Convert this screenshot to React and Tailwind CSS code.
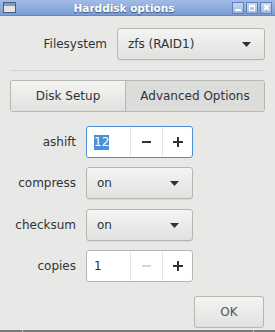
import React from "react";

function Arrow() {
  return (
    <svg width="9" height="5" viewBox="0 0 9 5" className="block">
      <path d="M0 0 L9 0 L4.5 5 Z" fill="#2e3436" />
    </svg>
  );
}

function Combo({ text, className }) {
  return (
    <div
      className={
        "h-[32px] flex items-center justify-between rounded-[3px] border border-[#b6b6b3] bg-gradient-to-b from-[#f4f4f3] to-[#e1e1df] shadow-[0_1px_0_rgba(0,0,0,0.06)] pl-[10px] " +
        className
      }
    >
      <span>{text}</span>
      <Arrow />
    </div>
  );
}

function Spin({ value, focused, selected, minusDisabled }) {
  return (
    <div
      className={
        "h-[32px] w-[107px] flex rounded-[3px] border bg-white " +
        (focused ? "border-[#4a90d9]" : "border-[#b6b6b3]")
      }
    >
      <div className="w-[43px] flex items-center pl-[7px]">
        {selected ? (
          <span className="bg-[#4a90d9] text-white leading-[15px]">{value}</span>
        ) : (
          <span>{value}</span>
        )}
      </div>
      <div className="w-[32px] flex items-center justify-center border-l border-[#e4e4e2]">
        <div className={"w-[9px] h-[2px] " + (minusDisabled ? "bg-[#d4d4d2]" : "bg-[#2e3436]")} />
      </div>
      <div className="flex-1 flex items-center justify-center border-l border-[#e4e4e2]">
        <div className="relative w-[10px] h-[10px]">
          <div className="absolute left-0 top-[4px] w-[10px] h-[2px] bg-[#2e3436]" />
          <div className="absolute left-[4px] top-0 w-[2px] h-[10px] bg-[#2e3436]" />
        </div>
      </div>
    </div>
  );
}

function TitleBtn({ children }) {
  return (
    <div className="w-[12px] h-[12px] border border-[#5f80b8] bg-gradient-to-b from-[#c9d8f0] to-[#9fb8e0] flex items-center justify-center">
      {children}
    </div>
  );
}

export default function App() {
  return (
    <div
      className="w-[275px] h-[332px] flex flex-col bg-[#e8e8e7] text-[#2e3436] text-[12px] overflow-hidden"
      style={{ fontFamily: '"DejaVu Sans", sans-serif' }}
    >
      {/* Title bar */}
      <div className="h-[16px] flex items-center bg-gradient-to-b from-[#a3bce6] to-[#7b9dd4] border-b border-[#6687c2] px-[3px]">
        <div className="w-[13px] h-[11px] border border-[#4d5f80] bg-[#e4e4e4] flex flex-col">
          <div className="h-[3px] bg-[#7f9cd0]" />
        </div>
        <div
          className="flex-1 text-center text-white font-bold text-[10.5px] leading-[14px]"
          style={{ textShadow: "0 1px 1px rgba(30,50,90,0.7)" }}
        >
          Harddisk options
        </div>
        <div className="flex gap-[2px]">
          <TitleBtn>
            <div className="w-[6px] h-[2px] bg-white mt-[5px]" />
          </TitleBtn>
          <TitleBtn>
            <div className="w-[6px] h-[6px] border border-white border-t-2" />
          </TitleBtn>
          <TitleBtn>
            <svg width="7" height="7" viewBox="0 0 7 7">
              <path d="M1 1 L6 6 M6 1 L1 6" stroke="white" strokeWidth="1.8" />
            </svg>
          </TitleBtn>
        </div>
      </div>

      {/* Filesystem */}
      <div className="mt-[12px] flex items-center">
        <div className="w-[107px] text-right">Filesystem</div>
        <Combo text="zfs (RAID1)" className="ml-[10px] w-[148px] pr-[13px]" />
      </div>

      {/* Separator */}
      <div className="mt-[10px] mx-[10px] h-px bg-[#d3d3d1]" />

      {/* Tabs */}
      <div className="mt-[9px] mx-[10px] h-[32px] flex rounded-[3px] border border-[#b6b6b3] overflow-hidden">
        <div className="w-[115px] flex items-center justify-center bg-gradient-to-b from-[#f4f4f3] to-[#e1e1df] border-r border-[#b6b6b3]">
          Disk Setup
        </div>
        <div className="flex-1 flex items-center justify-center bg-[#dcdcda]">
          Advanced Options
        </div>
      </div>

      {/* ashift */}
      <div className="mt-[14px] flex items-center">
        <div className="w-[76px] text-right">ashift</div>
        <div className="ml-[10px]">
          <Spin value="12" focused selected />
        </div>
      </div>

      {/* compress */}
      <div className="mt-[9px] flex items-center">
        <div className="w-[76px] text-right">compress</div>
        <Combo text="on" className="ml-[10px] w-[107px] pr-[13px]" />
      </div>

      {/* checksum */}
      <div className="mt-[10px] flex items-center">
        <div className="w-[76px] text-right">checksum</div>
        <Combo text="on" className="ml-[10px] w-[107px] pr-[13px]" />
      </div>

      {/* copies */}
      <div className="mt-[9px] flex items-center">
        <div className="w-[76px] text-right">copies</div>
        <div className="ml-[10px]">
          <Spin value="1" minusDisabled />
        </div>
      </div>

      {/* OK */}
      <div className="mt-[14px] flex justify-end pr-[11px]">
        <div className="w-[70px] h-[32px] flex items-center justify-center rounded-[3px] border border-[#b6b6b3] bg-gradient-to-b from-[#f4f4f3] to-[#e1e1df] text-[#555753]">
          OK
        </div>
      </div>

      <div className="flex-1" />
      <div className="h-[2px] bg-[#7a7a7a] flex">
        <div className="ml-[22px] w-px bg-[#c0c0c0]" />
        <div className="ml-[230px] w-px bg-[#c0c0c0]" />
      </div>
    </div>
  );
}
